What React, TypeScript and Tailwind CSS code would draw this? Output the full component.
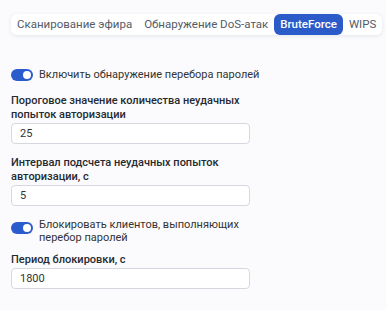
import { useState } from 'react';

const tabs = ['Сканирование эфира', 'Обнаружение DoS-атак', 'BruteForce', 'WIPS'];

function Toggle({ on, className = '' }: { on: boolean; className?: string }) {
  return (
    <span
      className={`relative inline-flex h-[12px] w-[22px] shrink-0 items-center rounded-full ${
        on ? 'bg-[#2b5ccd]' : 'bg-gray-300'
      } ${className}`}
    >
      <span
        className={`absolute h-[8px] w-[8px] rounded-full bg-white ${on ? 'left-[12px]' : 'left-[2px]'}`}
      />
    </span>
  );
}

function Field({ label, value }: { label: string; value: string }) {
  return (
    <div className="flex w-[239px] flex-col">
      <label className="text-[11px] font-medium leading-[14px] text-[#262a31]">{label}</label>
      <input
        defaultValue={value}
        className="mt-[1px] h-[21px] w-[239px] rounded-[4px] border border-[#d5d8df] bg-white px-[8px] text-[11px] text-[#333] outline-none"
      />
    </div>
  );
}

export default function App() {
  const [active] = useState(2);
  return (
    <div
      className="min-h-[310px] w-[386px] bg-[#fbfbfd] px-[11px] pt-[14px]"
      style={{ fontFamily: 'Roboto, sans-serif' }}
    >
      <div className="flex h-[21px] w-fit items-center whitespace-nowrap rounded-[6px] bg-white shadow-[0_1px_4px_rgba(60,70,110,0.12)]">
        {tabs.map((t, i) => (
          <span
            key={t}
            className={`flex h-[21px] items-center rounded-[6px] px-[6px] text-[11.5px] leading-none ${
              i === active ? 'bg-[#2a5bc9] font-medium text-white' : 'text-[#545b67]'
            }`}
          >
            {t}
          </span>
        ))}
      </div>

      <div className="mt-[32px] flex items-center gap-[6px]">
        <Toggle on />
        <span className="text-[11px] text-[#333]">Включить обнаружение перебора паролей</span>
      </div>

      <div className="mt-[10px] flex flex-col gap-[12px]">
        <Field label="Пороговое значение количества неудачных попыток авторизации" value="25" />
        <Field label="Интервал подсчета неудачных попыток авторизации, с" value="5" />
      </div>

      <div className="mt-[12px] flex items-start gap-[6px]">
        <Toggle on className="mt-[4px]" />
        <span className="w-[200px] text-[11px] leading-[13px] text-[#333]">
          Блокировать клиентов, выполняющих перебор паролей
        </span>
      </div>

      <div className="mt-[9px]">
        <Field label="Период блокировки, с" value="1800" />
      </div>
    </div>
  );
}
